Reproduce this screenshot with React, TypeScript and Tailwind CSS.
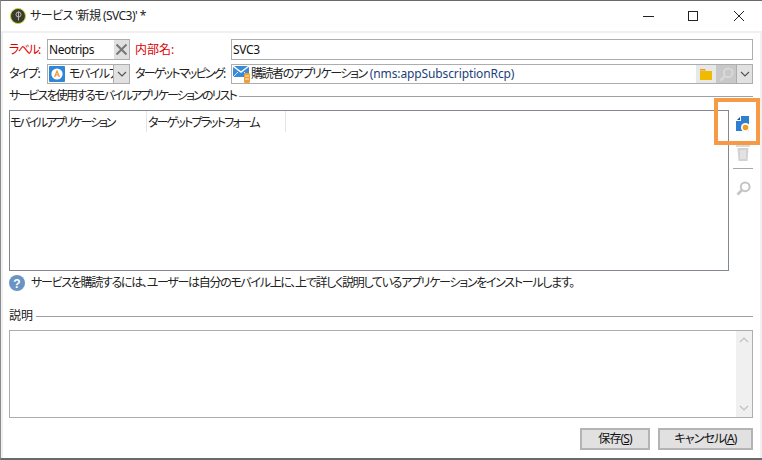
import type { ReactNode } from 'react'

const FONT = "font-['Noto_Sans','Noto_Sans_CJK_JP',sans-serif] [font-feature-settings:'palt']"

function Chevron({ className = 'stroke-[#555]' }: { className?: string }) {
  return (
    <svg width="10" height="6" viewBox="0 0 10 6" fill="none" className={className}>
      <path d="M1 1l4 4 4-4" strokeWidth="1.2" />
    </svg>
  )
}

function SearchIcon({ color = '#c4c4c4' }: { color?: string }) {
  return (
    <svg width="15" height="15" viewBox="0 0 15 15" fill="none">
      <circle cx="9.2" cy="5.8" r="4.4" stroke={color} strokeWidth="2" />
      <path d="M6 9L1.5 13.5" stroke={color} strokeWidth="2.6" />
    </svg>
  )
}

function MobileAppIcon() {
  return (
    <svg width="16" height="16" viewBox="0 0 16 16">
      <rect width="16" height="16" rx="1" fill="#2f86d6" />
      <circle cx="8" cy="8" r="5.6" fill="#fff" />
      <path d="M5.6 11L8 5l2.4 6M6.5 9h3" fill="none" stroke="#f0932b" strokeWidth="1.2" />
    </svg>
  )
}

function MappingIcon() {
  return (
    <svg width="18" height="18" viewBox="0 0 18 18">
      <rect x="0" y="1" width="16" height="11" fill="#3a8ad8" />
      <path d="M0 1l8 6 8-6" fill="none" stroke="#fff" strokeWidth="1.4" />
      <path d="M0 12l5-5M16 12l-5-5" stroke="#fff" strokeWidth="0.8" />
      <rect x="11" y="8" width="6" height="10" rx="1.5" fill="#f0a030" />
      <path d="M12 11h4M12 14h4" stroke="#fff" strokeWidth="0.8" />
    </svg>
  )
}

function FolderIcon() {
  return (
    <svg width="12" height="11" viewBox="0 0 12 11">
      <path d="M0 0h5l1 1.5H0z" fill="#f0932b" />
      <rect y="2" width="12" height="9" fill="#efbb00" />
    </svg>
  )
}

function AddServiceIcon() {
  return (
    <svg width="14" height="16" viewBox="0 0 14 16">
      <path d="M5 0h8v15H0V5h5z" fill="#2f7fd0" />
      <path d="M1 4l3-3v3z" fill="#1f4f94" />
      <circle cx="9.5" cy="11.5" r="4.5" fill="#fff" />
      <circle cx="9.5" cy="11.5" r="2.8" fill="#f59a16" />
    </svg>
  )
}

function TrashIcon() {
  return (
    <svg width="14" height="16" viewBox="0 0 14 16">
      <rect y="0" width="14" height="2" fill="#dadada" />
      <path d="M1.5 3h11l-1 13h-9z" fill="#d2d2d2" />
      <path d="M5 5v9M7 5v9M9 5v9" stroke="#f2f2f2" strokeWidth="1" />
    </svg>
  )
}

function Section({ children, tracking }: { children: ReactNode; tracking: string }) {
  return (
    <div className="flex h-4 items-center gap-[3px] text-[12px] text-[#222]">
      <span className={`shrink-0 ${tracking}`}>{children}</span>
      <div className="h-px flex-1 bg-[#a0a0a0]" />
    </div>
  )
}

function Button({ width, children }: { width: string; children: ReactNode }) {
  return (
    <button className={`flex h-[22px] items-center justify-center border-2 border-[#b4b4b4] bg-[#e1e1e1] text-[12px] tracking-[-0.9px] text-[#111] ${width}`}>
      {children}
    </button>
  )
}

export default function App() {
  return (
    <div className={`flex h-[460px] w-[762px] flex-col overflow-hidden border-t border-b-2 border-l border-t-[#6a6a6a] border-b-[#6a6a6a] border-l-[#8c8c8c] bg-white ${FONT}`}>
      {/* title bar */}
      <div className="flex h-[30px] shrink-0 items-center pl-[9px] text-[12px] text-[#222]">
        <svg width="16" height="16" viewBox="0 0 16 16">
          <circle cx="8" cy="8" r="7.5" fill="#3a3a32" stroke="#c4d636" strokeWidth="1" />
          <path d="M8.5 3.5v9M6 6.5a2.5 2.5 0 0 1 5 0 2.5 2.5 0 0 1-5 0" fill="none" stroke="#b9b9a8" strokeWidth="1" />
        </svg>
        <span className="ml-[4px] tracking-[-0.55px]">サービス '新規 (SVC3)' *</span>
        <div className="ml-auto flex items-center pr-[17px]">
          <svg width="102" height="14" viewBox="0 0 102 14" fill="none" stroke="#222" strokeWidth="1">
            <path d="M0 7.5h11" />
            <rect x="45.5" y="2.5" width="9" height="9" />
            <path d="M91 2l10 10M101 2L91 12" />
          </svg>
        </div>
      </div>
      <div className="h-[2px] shrink-0 bg-[#f0f0f0]" />

      <div className="relative flex flex-1 flex-col border-x-2 border-[#f0f0f0] pl-[6px] pt-[6px]">
        {/* label row */}
        <div className="flex h-[21px] items-center text-[12px]">
          <span className="w-[38px] whitespace-nowrap tracking-[-1.6px] text-[#e00000]">ラベル:</span>
          <div className="flex h-full w-[83px] items-center justify-between border border-[#adadad] pl-px tracking-[-0.45px] text-[#111]">
            Neotrips
            <span className="flex h-full w-[15px] items-center justify-center bg-[#e0e0e0]">
              <svg width="11" height="11" viewBox="0 0 11 11">
                <path d="M0.5 0.5l10 10M10.5 0.5l-10 10" stroke="#777" strokeWidth="2" />
              </svg>
            </span>
          </div>
          <span className="ml-[5px] w-[96px] text-[#e00000]">内部名:</span>
          <div className="flex h-full w-[522px] items-center border border-[#adadad] pl-[1px] tracking-[-0.3px] text-[#111]">SVC3</div>
        </div>

        {/* type row */}
        <div className="mt-[4px] flex h-[20px] items-center text-[12px] text-[#222]">
          <span className="w-[38px] whitespace-nowrap tracking-[-1.2px]">タイプ:</span>
          <div className="flex h-full w-[83px] items-center border border-[#adadad] pl-px">
            <MobileAppIcon />
            <span className="ml-[4px] w-[44px] overflow-hidden whitespace-nowrap tracking-[-1.2px]">モバイルアプリ</span>
            <span className="flex h-full flex-1 items-center justify-center border-l border-[#adadad] bg-[#e1e1e1]">
              <Chevron />
            </span>
          </div>
          <span className="ml-[5px] w-[96px] whitespace-nowrap tracking-[-1.75px]">ターゲットマッピング:</span>
          <div className="flex h-full w-[522px] items-center border border-[#adadad] pl-px">
            <MappingIcon />
            <span className="whitespace-nowrap">
              <span className="tracking-[-1.45px]">購読者のアプリケーション</span>{' '}
              <span className="tracking-[-0.12px] text-[#1c3f7a]">(nms:appSubscriptionRcp)</span>
            </span>
            <span className="ml-auto flex h-full w-5 items-center justify-center bg-[#e8e8e8]">
              <FolderIcon />
            </span>
            <span className="flex h-full w-5 items-center justify-center bg-[#c8c8c8]">
              <SearchIcon color="#d8d8d8" />
            </span>
            <span className="flex h-full w-4 items-center justify-center border-l border-[#adadad] bg-[#e1e1e1]">
              <Chevron />
            </span>
          </div>
        </div>

        <div className="mt-[4px] w-[744px]">
          <Section tracking="tracking-[-1.85px]">サービスを使用するモバイルアプリケーションのリスト</Section>
        </div>

        {/* list with side toolbar */}
        <div className="mt-[6px] flex h-[161px]">
          <div className="w-[720px] border border-[#828790]">
            <div className="flex h-[21px] items-center whitespace-nowrap text-[12px] text-[#222]">
              <span className="h-full w-[137px] border-r border-[#e5e5e5] leading-[23px] tracking-[-2.15px]">モバイルアプリケーション</span>
              <span className="h-full w-[139px] border-r border-[#e5e5e5] pl-px leading-[23px] tracking-[-1.85px]">ターゲットプラットフォーム</span>
            </div>
          </div>
          <div className="flex w-[24px] flex-col items-center pl-[4px] pt-[6px]">
            <AddServiceIcon />
            <div className="mt-[13px]">
              <TrashIcon />
            </div>
            <div className="mt-[7px] h-px w-[20px] bg-[#a8a8a8]" />
            <div className="mt-[12px]">
              <SearchIcon />
            </div>
          </div>
        </div>

        {/* info */}
        <div className="mt-[3px] flex h-[18px] items-center text-[12px] text-[#222]">
          <svg width="16" height="16" viewBox="0 0 16 16">
            <circle cx="8" cy="8" r="8" fill="#6b93c4" />
            <text x="8" y="12.5" textAnchor="middle" fontSize="12" fontWeight="700" fill="#fff" fontFamily="Liberation Sans">?</text>
          </svg>
          <span className="ml-[6px] whitespace-nowrap tracking-[-1.3px]">サービスを購読するには、ユーザーは自分のモバイル上に、上で詳しく説明しているアプリケーションをインストールします。</span>
        </div>

        <div className="mt-[16px] w-[744px]">
          <Section tracking="tracking-normal">説明</Section>
        </div>

        {/* description */}
        <div className="mt-[6px] flex h-[88px] w-[744px] justify-end border border-[#adadad]">
          <div className="flex w-[16px] flex-col items-center justify-between bg-[#f0f0f0] py-[6px]">
            <Chevron className="rotate-180 stroke-[#c0c0c0]" />
            <Chevron className="stroke-[#c0c0c0]" />
          </div>
        </div>

        {/* buttons */}
        <div className="mt-[10px] flex w-[744px] justify-end gap-2">
          <Button width="w-[70px]">
            保存(<span className="underline">S</span>)
          </Button>
          <Button width="w-[95px]">
            キャンセル(<span className="underline">A</span>)
          </Button>
        </div>

        {/* annotation box over the toolbar */}
        <div className="absolute left-[711px] top-[65px] h-[47px] w-[46px] border-[4px] border-[#f79a46]" />
      </div>
    </div>
  )
}
